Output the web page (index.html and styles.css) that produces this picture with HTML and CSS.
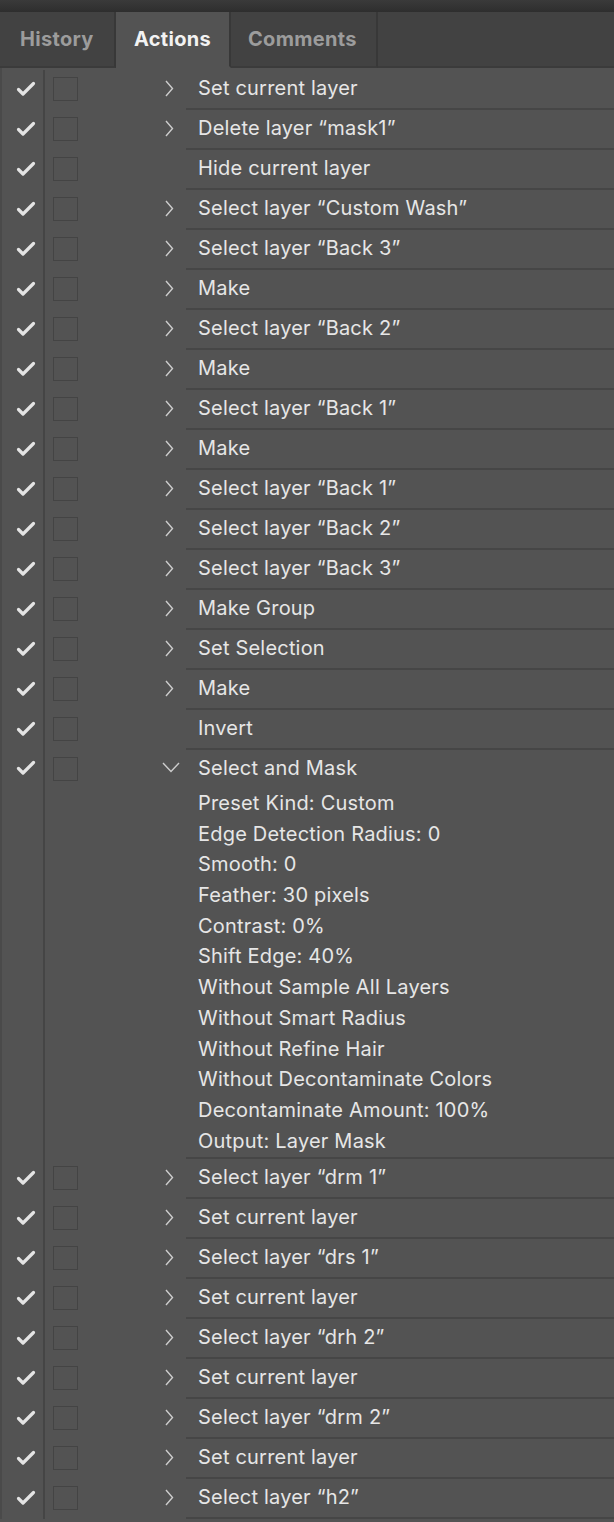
FILE: index.html
```html
<!DOCTYPE html>
<html lang="en">
<head>
	<meta charset="UTF-8">
	<title>Actions</title>
	<link rel="stylesheet" href="styles.css">
</head>
<body>
<div class="topbar"></div>
<div class="tabs">
	<div class="tab">History</div>
	<div class="tab active">Actions</div>
	<div class="tab">Comments</div>
	<div class="tab-fill"></div>
</div>
<div class="panel">
	<ul class="steps">
		<li class="step"><span class="tog"><svg class="check" viewBox="0 0 20 16"><path d="M2.5 8.5 L7 13 L17.5 2.5"/></svg></span><span class="dlg"><i class="box"></i></span><span class="exp"><svg class="chev" viewBox="0 0 9 17"><path d="M1 1 L7.5 8.5 L1 16"/></svg></span><span class="name">Set current layer</span></li>
		<li class="step"><span class="tog"><svg class="check" viewBox="0 0 20 16"><path d="M2.5 8.5 L7 13 L17.5 2.5"/></svg></span><span class="dlg"><i class="box"></i></span><span class="exp"><svg class="chev" viewBox="0 0 9 17"><path d="M1 1 L7.5 8.5 L1 16"/></svg></span><span class="name">Delete layer “mask1”</span></li>
		<li class="step"><span class="tog"><svg class="check" viewBox="0 0 20 16"><path d="M2.5 8.5 L7 13 L17.5 2.5"/></svg></span><span class="dlg"><i class="box"></i></span><span class="exp"></span><span class="name">Hide current layer</span></li>
		<li class="step"><span class="tog"><svg class="check" viewBox="0 0 20 16"><path d="M2.5 8.5 L7 13 L17.5 2.5"/></svg></span><span class="dlg"><i class="box"></i></span><span class="exp"><svg class="chev" viewBox="0 0 9 17"><path d="M1 1 L7.5 8.5 L1 16"/></svg></span><span class="name">Select layer “Custom Wash”</span></li>
		<li class="step"><span class="tog"><svg class="check" viewBox="0 0 20 16"><path d="M2.5 8.5 L7 13 L17.5 2.5"/></svg></span><span class="dlg"><i class="box"></i></span><span class="exp"><svg class="chev" viewBox="0 0 9 17"><path d="M1 1 L7.5 8.5 L1 16"/></svg></span><span class="name">Select layer “Back 3”</span></li>
		<li class="step"><span class="tog"><svg class="check" viewBox="0 0 20 16"><path d="M2.5 8.5 L7 13 L17.5 2.5"/></svg></span><span class="dlg"><i class="box"></i></span><span class="exp"><svg class="chev" viewBox="0 0 9 17"><path d="M1 1 L7.5 8.5 L1 16"/></svg></span><span class="name">Make</span></li>
		<li class="step"><span class="tog"><svg class="check" viewBox="0 0 20 16"><path d="M2.5 8.5 L7 13 L17.5 2.5"/></svg></span><span class="dlg"><i class="box"></i></span><span class="exp"><svg class="chev" viewBox="0 0 9 17"><path d="M1 1 L7.5 8.5 L1 16"/></svg></span><span class="name">Select layer “Back 2”</span></li>
		<li class="step"><span class="tog"><svg class="check" viewBox="0 0 20 16"><path d="M2.5 8.5 L7 13 L17.5 2.5"/></svg></span><span class="dlg"><i class="box"></i></span><span class="exp"><svg class="chev" viewBox="0 0 9 17"><path d="M1 1 L7.5 8.5 L1 16"/></svg></span><span class="name">Make</span></li>
		<li class="step"><span class="tog"><svg class="check" viewBox="0 0 20 16"><path d="M2.5 8.5 L7 13 L17.5 2.5"/></svg></span><span class="dlg"><i class="box"></i></span><span class="exp"><svg class="chev" viewBox="0 0 9 17"><path d="M1 1 L7.5 8.5 L1 16"/></svg></span><span class="name">Select layer “Back 1”</span></li>
		<li class="step"><span class="tog"><svg class="check" viewBox="0 0 20 16"><path d="M2.5 8.5 L7 13 L17.5 2.5"/></svg></span><span class="dlg"><i class="box"></i></span><span class="exp"><svg class="chev" viewBox="0 0 9 17"><path d="M1 1 L7.5 8.5 L1 16"/></svg></span><span class="name">Make</span></li>
		<li class="step"><span class="tog"><svg class="check" viewBox="0 0 20 16"><path d="M2.5 8.5 L7 13 L17.5 2.5"/></svg></span><span class="dlg"><i class="box"></i></span><span class="exp"><svg class="chev" viewBox="0 0 9 17"><path d="M1 1 L7.5 8.5 L1 16"/></svg></span><span class="name">Select layer “Back 1”</span></li>
		<li class="step"><span class="tog"><svg class="check" viewBox="0 0 20 16"><path d="M2.5 8.5 L7 13 L17.5 2.5"/></svg></span><span class="dlg"><i class="box"></i></span><span class="exp"><svg class="chev" viewBox="0 0 9 17"><path d="M1 1 L7.5 8.5 L1 16"/></svg></span><span class="name">Select layer “Back 2”</span></li>
		<li class="step"><span class="tog"><svg class="check" viewBox="0 0 20 16"><path d="M2.5 8.5 L7 13 L17.5 2.5"/></svg></span><span class="dlg"><i class="box"></i></span><span class="exp"><svg class="chev" viewBox="0 0 9 17"><path d="M1 1 L7.5 8.5 L1 16"/></svg></span><span class="name">Select layer “Back 3”</span></li>
		<li class="step"><span class="tog"><svg class="check" viewBox="0 0 20 16"><path d="M2.5 8.5 L7 13 L17.5 2.5"/></svg></span><span class="dlg"><i class="box"></i></span><span class="exp"><svg class="chev" viewBox="0 0 9 17"><path d="M1 1 L7.5 8.5 L1 16"/></svg></span><span class="name">Make Group</span></li>
		<li class="step"><span class="tog"><svg class="check" viewBox="0 0 20 16"><path d="M2.5 8.5 L7 13 L17.5 2.5"/></svg></span><span class="dlg"><i class="box"></i></span><span class="exp"><svg class="chev" viewBox="0 0 9 17"><path d="M1 1 L7.5 8.5 L1 16"/></svg></span><span class="name">Set Selection</span></li>
		<li class="step"><span class="tog"><svg class="check" viewBox="0 0 20 16"><path d="M2.5 8.5 L7 13 L17.5 2.5"/></svg></span><span class="dlg"><i class="box"></i></span><span class="exp"><svg class="chev" viewBox="0 0 9 17"><path d="M1 1 L7.5 8.5 L1 16"/></svg></span><span class="name">Make</span></li>
		<li class="step"><span class="tog"><svg class="check" viewBox="0 0 20 16"><path d="M2.5 8.5 L7 13 L17.5 2.5"/></svg></span><span class="dlg"><i class="box"></i></span><span class="exp"></span><span class="name">Invert</span></li>
		<li class="step open"><span class="tog"><svg class="check" viewBox="0 0 20 16"><path d="M2.5 8.5 L7 13 L17.5 2.5"/></svg></span><span class="dlg"><i class="box"></i></span><span class="exp"><svg class="chev-down" viewBox="0 0 18 11"><path d="M1 1 L9 9.5 L17 1"/></svg></span><span class="name">Select and Mask</span></li>
		<li class="params">
			<span class="tog"></span>
			<ul class="param-list">
				<li>Preset Kind: Custom</li>
				<li>Edge Detection Radius: 0</li>
				<li>Smooth: 0</li>
				<li>Feather: 30 pixels</li>
				<li>Contrast: 0%</li>
				<li>Shift Edge: 40%</li>
				<li>Without Sample All Layers</li>
				<li>Without Smart Radius</li>
				<li>Without Refine Hair</li>
				<li>Without Decontaminate Colors</li>
				<li>Decontaminate Amount: 100%</li>
				<li>Output: Layer Mask</li>
			</ul>
		</li>
		<li class="step"><span class="tog"><svg class="check" viewBox="0 0 20 16"><path d="M2.5 8.5 L7 13 L17.5 2.5"/></svg></span><span class="dlg"><i class="box"></i></span><span class="exp"><svg class="chev" viewBox="0 0 9 17"><path d="M1 1 L7.5 8.5 L1 16"/></svg></span><span class="name">Select layer “drm 1”</span></li>
		<li class="step"><span class="tog"><svg class="check" viewBox="0 0 20 16"><path d="M2.5 8.5 L7 13 L17.5 2.5"/></svg></span><span class="dlg"><i class="box"></i></span><span class="exp"><svg class="chev" viewBox="0 0 9 17"><path d="M1 1 L7.5 8.5 L1 16"/></svg></span><span class="name">Set current layer</span></li>
		<li class="step"><span class="tog"><svg class="check" viewBox="0 0 20 16"><path d="M2.5 8.5 L7 13 L17.5 2.5"/></svg></span><span class="dlg"><i class="box"></i></span><span class="exp"><svg class="chev" viewBox="0 0 9 17"><path d="M1 1 L7.5 8.5 L1 16"/></svg></span><span class="name">Select layer “drs 1”</span></li>
		<li class="step"><span class="tog"><svg class="check" viewBox="0 0 20 16"><path d="M2.5 8.5 L7 13 L17.5 2.5"/></svg></span><span class="dlg"><i class="box"></i></span><span class="exp"><svg class="chev" viewBox="0 0 9 17"><path d="M1 1 L7.5 8.5 L1 16"/></svg></span><span class="name">Set current layer</span></li>
		<li class="step"><span class="tog"><svg class="check" viewBox="0 0 20 16"><path d="M2.5 8.5 L7 13 L17.5 2.5"/></svg></span><span class="dlg"><i class="box"></i></span><span class="exp"><svg class="chev" viewBox="0 0 9 17"><path d="M1 1 L7.5 8.5 L1 16"/></svg></span><span class="name">Select layer “drh 2”</span></li>
		<li class="step"><span class="tog"><svg class="check" viewBox="0 0 20 16"><path d="M2.5 8.5 L7 13 L17.5 2.5"/></svg></span><span class="dlg"><i class="box"></i></span><span class="exp"><svg class="chev" viewBox="0 0 9 17"><path d="M1 1 L7.5 8.5 L1 16"/></svg></span><span class="name">Set current layer</span></li>
		<li class="step"><span class="tog"><svg class="check" viewBox="0 0 20 16"><path d="M2.5 8.5 L7 13 L17.5 2.5"/></svg></span><span class="dlg"><i class="box"></i></span><span class="exp"><svg class="chev" viewBox="0 0 9 17"><path d="M1 1 L7.5 8.5 L1 16"/></svg></span><span class="name">Select layer “drm 2”</span></li>
		<li class="step"><span class="tog"><svg class="check" viewBox="0 0 20 16"><path d="M2.5 8.5 L7 13 L17.5 2.5"/></svg></span><span class="dlg"><i class="box"></i></span><span class="exp"><svg class="chev" viewBox="0 0 9 17"><path d="M1 1 L7.5 8.5 L1 16"/></svg></span><span class="name">Set current layer</span></li>
		<li class="step"><span class="tog"><svg class="check" viewBox="0 0 20 16"><path d="M2.5 8.5 L7 13 L17.5 2.5"/></svg></span><span class="dlg"><i class="box"></i></span><span class="exp"><svg class="chev" viewBox="0 0 9 17"><path d="M1 1 L7.5 8.5 L1 16"/></svg></span><span class="name">Select layer “h2”</span></li>
	</ul>
</div>
</body>
</html>
```

FILE: styles.css
```css
*{
	margin: 0;
	padding: 0;
	box-sizing: border-box;
}
li{
	list-style: none;
}
html,body{
	background: #535353;
	height: 1522px;
	overflow: hidden;
}
body{
	font-family: Inter, "Liberation Sans", sans-serif;
	color: #e6e6e6;
}
.topbar{
	height: 12px;
	background: linear-gradient(#3a3a3a, #2e2e2e);
}
.tabs{
	display: flex;
	background: #424242;
}
.tab{
	height: 56px;
	line-height: 54px;
	font-size: 20px;
	font-weight: 700;
	letter-spacing: 0.3px;
	color: #9c9c9c;
	border-right: 2px solid #383838;
	border-bottom: 2px solid #3b3b3b;
}
.tab:nth-child(1){
	width: 116px;
	padding-left: 20px;
}
.tab:nth-child(2){
	width: 115px;
	padding-left: 18px;
}
.tab:nth-child(3){
	width: 147px;
	padding-left: 17px;
}
.tab.active{
	background: #535353;
	color: #f2f2f2;
	border-bottom-color: #535353;
}
.tab-fill{
	flex: 1;
	height: 56px;
	border-bottom: 2px solid #3b3b3b;
}
.panel{
	border-left: 2px solid #4a4a4a;
	padding-top: 2px;
}
.step{
	display: flex;
	height: 40px;
}
.tog{
	width: 43px;
	flex: none;
	border-right: 2px solid #454545;
	display: flex;
	align-items: center;
	justify-content: center;
	padding: 0 0 3px 6px;
}
.check{
	width: 20px;
	height: 16px;
	fill: none;
	stroke: #e4e4e4;
	stroke-width: 3.2;
	stroke-linecap: round;
	stroke-linejoin: round;
}
.dlg{
	width: 105px;
	padding: 7px 0 0 8px;
}
.box{
	display: block;
	width: 25px;
	height: 24px;
	border: 1.5px solid #444;
}
.exp{
	width: 36px;
	display: flex;
	align-items: center;
	padding: 0 0 3px 15px;
}
.chev{
	width: 9px;
	height: 17px;
	fill: none;
	stroke: #cdcdcd;
	stroke-width: 1.4;
}
.chev-down{
	width: 18px;
	height: 11px;
	margin-left: -3px;
	fill: none;
	stroke: #cdcdcd;
	stroke-width: 1.4;
}
.name{
	flex: 1;
	height: 40px;
	line-height: 37px;
	padding-left: 12px;
	font-size: 20px;
	letter-spacing: 0.2px;
	border-bottom: 2px solid #464646;
	white-space: nowrap;
}
.step.open{
	height: 38px;
}
.step.open .name{
	height: 38px;
	border-bottom: none;
}
.params{
	display: flex;
}
.param-list{
	flex: 1;
	margin-left: 141px;
	padding: 0 0 1px 12px;
	border-bottom: 2px solid #464646;
}
.param-list li{
	height: 30.7px;
	line-height: 30px;
	font-size: 20px;
	letter-spacing: 0.2px;
	white-space: nowrap;
}
```
